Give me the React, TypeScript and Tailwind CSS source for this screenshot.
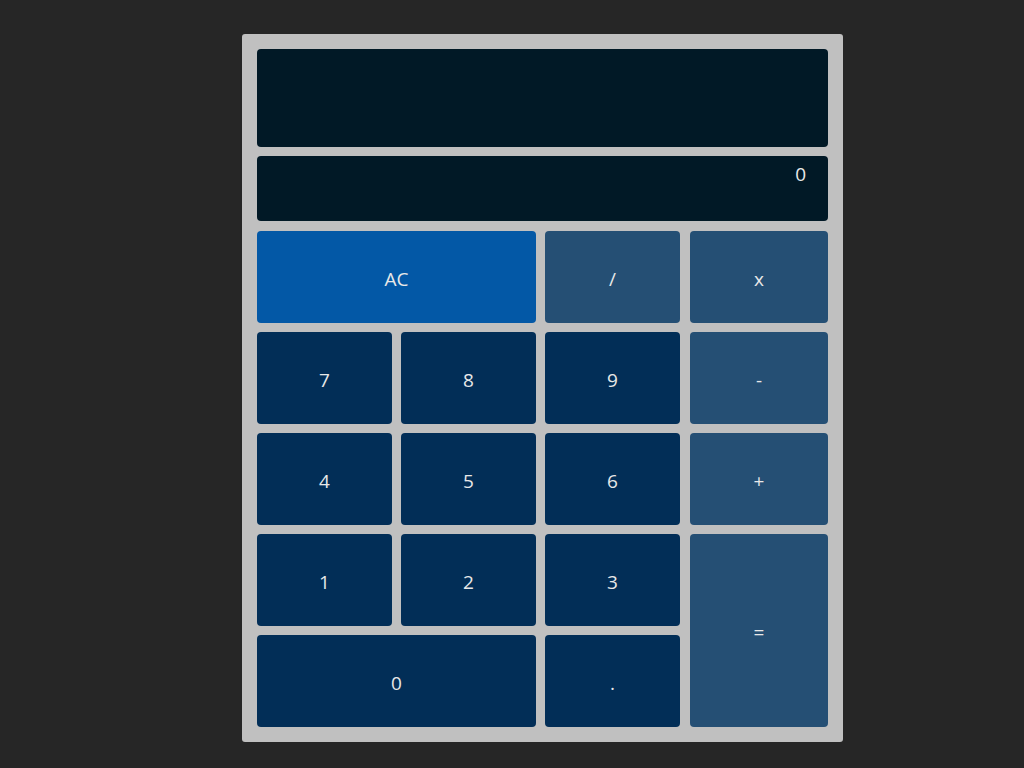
import React, { useState } from 'react';

const num = 'bg-[#022e57]';
const op = 'ml-[1px] bg-[#254f74]';

export default function App() {
  const [value] = useState('0');

  const keys: { label: string; cls: string }[] = [
    { label: 'AC', cls: 'col-span-2 bg-[#0358a6]' },
    { label: '/', cls: 'bg-[#254f74]' },
    { label: 'x', cls: op },
    { label: '7', cls: num },
    { label: '8', cls: num },
    { label: '9', cls: num },
    { label: '-', cls: op },
    { label: '4', cls: num },
    { label: '5', cls: num },
    { label: '6', cls: num },
    { label: '+', cls: op },
    { label: '1', cls: num },
    { label: '2', cls: num },
    { label: '3', cls: num },
    { label: '=', cls: 'row-span-2 ' + op },
    { label: '0', cls: 'col-span-2 ' + num },
    { label: '.', cls: num },
  ];

  return (
    <div className="min-h-[768px] bg-[#262626] pt-[34px] pl-[242px] font-['Open_Sans','Noto_Sans',sans-serif]">
      <div className="w-[601px] rounded-[3px] bg-[#c0c0c0] p-[15px] flex flex-col">
        {/* Displays */}
        <div className="h-[98px] rounded bg-[#011926]" />
        <div className="mt-[9px] h-[65px] rounded bg-[#011926] pr-[22px] pt-[4px] text-right text-[19px] text-[#e8e8e8]">
          {value}
        </div>

        {/* Keys */}
        <div className="mt-[10px] grid grid-cols-[135px_135px_135px_1fr] auto-rows-[92px] gap-[9px]">
          {keys.map((k) => (
            <button
              key={k.label}
              className={`${k.cls} rounded flex items-center justify-center pt-[4px] text-[19px] text-[#e8e8e8]`}
            >
              {k.label}
            </button>
          ))}
        </div>
      </div>
    </div>
  );
}
